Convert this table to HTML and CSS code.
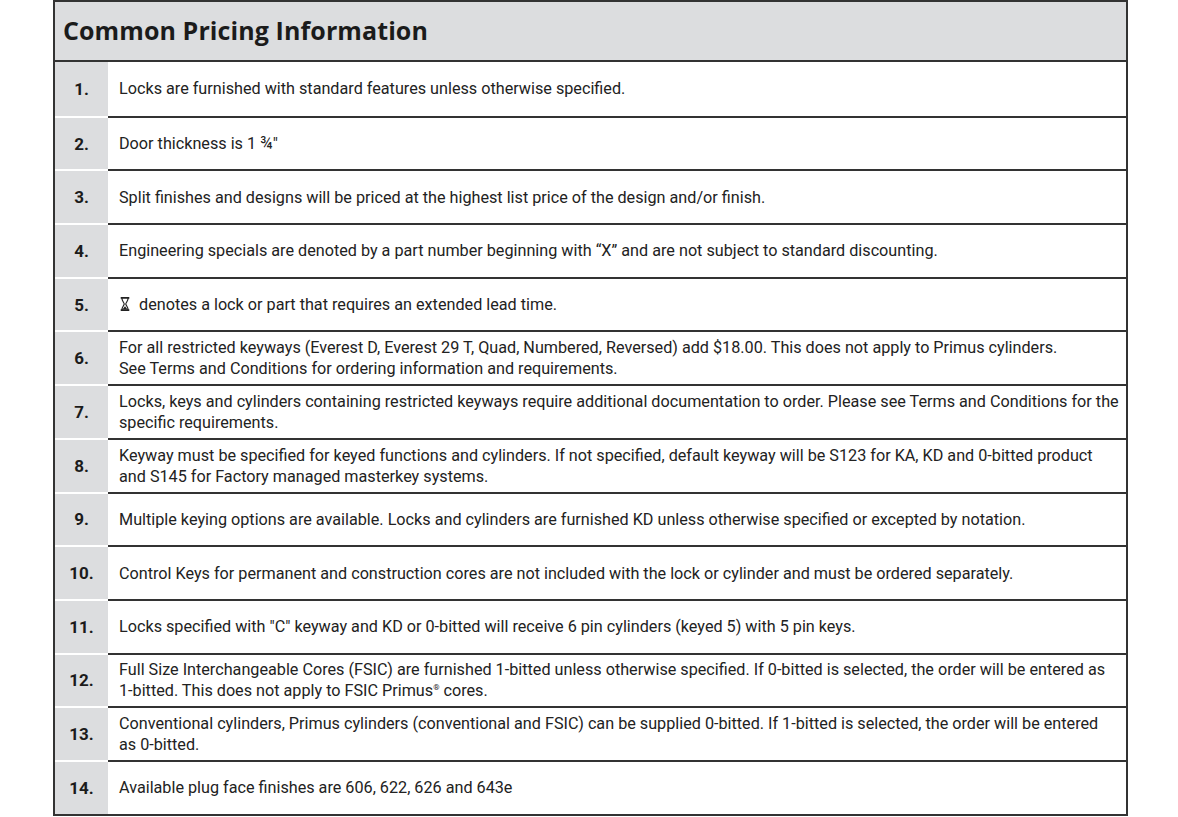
FILE: index.html
```html
<!DOCTYPE html>
<html>
<head>
<meta charset="utf-8">
<link rel="stylesheet" href="styles.css">
</head>
<body>
<div class="table">
  <div class="head">Common Pricing Information</div>
  <div class="row"><div class="num">1.</div><div class="txt"><span>Locks are furnished with standard features unless otherwise specified.</span></div></div>
  <div class="row"><div class="num">2.</div><div class="txt"><span>Door thickness is 1 ¾"</span></div></div>
  <div class="row"><div class="num">3.</div><div class="txt"><span>Split finishes and designs will be priced at the highest list price of the design and/or finish.</span></div></div>
  <div class="row"><div class="num">4.</div><div class="txt"><span>Engineering specials are denoted by a part number beginning with “X” and are not subject to standard discounting.</span></div></div>
  <div class="row"><div class="num">5.</div><div class="txt"><span><svg class="glass" width="10" height="14" viewBox="0 0 10 14"><path d="M0.7 0.9H9.3M0.7 13.1H9.3" stroke="#222" stroke-width="1.6" fill="none"/><path d="M1.9 1C1.9 4.3 4.2 5.6 4.2 7C4.2 8.4 1.9 9.7 1.9 13M8.1 1C8.1 4.3 5.8 5.6 5.8 7C5.8 8.4 8.1 9.7 8.1 13" stroke="#222" stroke-width="1.2" fill="none"/><path d="M5 9.3L7.6 12.6H2.4Z" fill="#222"/></svg>denotes a lock or part that requires an extended lead time.</span></div></div>
  <div class="row"><div class="num">6.</div><div class="txt"><span>For all restricted keyways (Everest D, Everest 29 T, Quad, Numbered, Reversed) add $18.00. This does not apply to Primus cylinders.</span><span>See Terms and Conditions for ordering information and requirements.</span></div></div>
  <div class="row"><div class="num">7.</div><div class="txt"><span>Locks, keys and cylinders containing restricted keyways require additional documentation to order. Please see Terms and Conditions for the</span><span>specific requirements.</span></div></div>
  <div class="row"><div class="num">8.</div><div class="txt"><span>Keyway must be specified for keyed functions and cylinders. If not specified, default keyway will be S123 for KA, KD and 0-bitted product</span><span>and S145 for Factory managed masterkey systems.</span></div></div>
  <div class="row"><div class="num">9.</div><div class="txt"><span>Multiple keying options are available. Locks and cylinders are furnished KD unless otherwise specified or excepted by notation.</span></div></div>
  <div class="row"><div class="num">10.</div><div class="txt"><span>Control Keys for permanent and construction cores are not included with the lock or cylinder and must be ordered separately.</span></div></div>
  <div class="row"><div class="num">11.</div><div class="txt"><span>Locks specified with "C" keyway and KD or 0-bitted will receive 6 pin cylinders (keyed 5) with 5 pin keys.</span></div></div>
  <div class="row"><div class="num">12.</div><div class="txt"><span>Full Size Interchangeable Cores (FSIC) are furnished 1-bitted unless otherwise specified. If 0-bitted is selected, the order will be entered as</span><span>1-bitted. This does not apply to FSIC Primus<sup>®</sup> cores.</span></div></div>
  <div class="row"><div class="num">13.</div><div class="txt"><span>Conventional cylinders, Primus cylinders (conventional and FSIC) can be supplied 0-bitted. If 1-bitted is selected, the order will be entered</span><span>as 0-bitted.</span></div></div>
  <div class="row"><div class="num">14.</div><div class="txt"><span>Available plug face finishes are 606, 622, 626 and 643e</span></div></div>
</div>
</body>
</html>
```
FILE: styles.css
```css
html, body {
  margin: 0;
  padding: 0;
  background: #fff;
}
body {
  padding: 0 0 0 53px;
  font-family: Roboto, "Liberation Sans", sans-serif;
  color: #222;
}
.table {
  width: 1075px;
  box-sizing: border-box;
  border: 2px solid #333;
  display: flex;
  flex-direction: column;
  overflow: hidden;
}
.head {
  background: #dcdddf;
  border-bottom: 2px solid #333;
  display: flex;
  align-items: center;
  padding-left: 8px;
  padding-bottom: 2px;
  box-sizing: border-box;
  height: 60px;
  font-family: "Open Sans", Roboto, sans-serif;
  font-weight: 700;
  font-size: 25px;
  letter-spacing: 0.1px;
  color: #1b1b1b;
}
.row {
  display: grid;
  grid-template-columns: 53px 1fr;
  height: 53.7px;
}
.num {
  background: #dcdddf;
  display: flex;
  align-items: center;
  justify-content: center;
  font-weight: 700;
  font-size: 17px;
  color: #1b1b1b;
}
.txt {
  display: flex;
  flex-direction: column;
  justify-content: center;
  padding-left: 11px;
  font-size: 16.2px;
  line-height: 21px;
  white-space: nowrap;
}
.row + .row .num {
  border-top: 2px solid #fff;
}
.row + .row .txt {
  border-top: 2px solid #333;
}
.glass {
  vertical-align: -1px;
  margin: 0 9px 0 1px;
}
sup {
  font-size: 8px;
  vertical-align: 6px;
  line-height: 0;
}
```
